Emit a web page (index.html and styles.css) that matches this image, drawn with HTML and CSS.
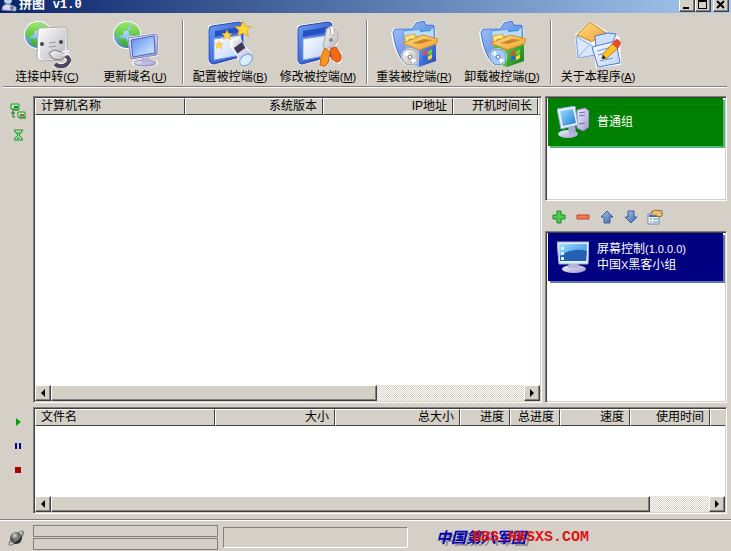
FILE: index.html
```html
<!DOCTYPE html>
<html lang="zh-CN">
<head>
<meta charset="utf-8">
<title>拼图 v1.0</title>
<link rel="stylesheet" href="styles.css">
</head>
<body>
<svg class="defs" aria-hidden="true">
  <defs>
    <radialGradient id="sea" cx=".4" cy=".3" r=".8"><stop offset="0" stop-color="#c8e6ff"/><stop offset=".5" stop-color="#6fb0ee"/><stop offset="1" stop-color="#2c63c0"/></radialGradient>
    <linearGradient id="land" x1="0" y1="0" x2="0" y2="1"><stop offset="0" stop-color="#9cea62"/><stop offset="1" stop-color="#38a834"/></linearGradient>
    <linearGradient id="plate" x1="0" y1="0" x2="1" y2="1"><stop offset="0" stop-color="#fbfbfb"/><stop offset="1" stop-color="#b4b4b8"/></linearGradient>
    <linearGradient id="screen" x1="0" y1="0" x2="1" y2="1"><stop offset="0" stop-color="#5a86ee"/><stop offset=".5" stop-color="#9cc0fb"/><stop offset="1" stop-color="#dcecff"/></linearGradient>
    <linearGradient id="blue" x1="0" y1="0" x2="1" y2="1"><stop offset="0" stop-color="#6e9cf6"/><stop offset="1" stop-color="#1c40b4"/></linearGradient>
    <linearGradient id="pane" x1="0" y1="0" x2="1" y2="1"><stop offset="0" stop-color="#ffffff"/><stop offset="1" stop-color="#bcd2f8"/></linearGradient>
    <linearGradient id="folder" x1="0" y1="0" x2="1" y2="1"><stop offset="0" stop-color="#a8c6fa"/><stop offset="1" stop-color="#3c6cd8"/></linearGradient>
    <linearGradient id="gold" x1="0" y1="0" x2="1" y2="1"><stop offset="0" stop-color="#ffe08a"/><stop offset="1" stop-color="#eea02c"/></linearGradient>
    <linearGradient id="greenbox" x1="0" y1="0" x2="1" y2="1"><stop offset="0" stop-color="#5cc84a"/><stop offset="1" stop-color="#137a18"/></linearGradient>
    <linearGradient id="lilac" x1="0" y1="0" x2="1" y2="1"><stop offset="0" stop-color="#f4f2ff"/><stop offset="1" stop-color="#9c98cc"/></linearGradient>
    <linearGradient id="cyan" x1="0" y1="0" x2="1" y2="1"><stop offset="0" stop-color="#9ce0ff"/><stop offset="1" stop-color="#2478d8"/></linearGradient>
    <linearGradient id="arrow" x1="0" y1="0" x2="1" y2="1"><stop offset="0" stop-color="#a8c8f0"/><stop offset="1" stop-color="#3c64a8"/></linearGradient>
    <radialGradient id="planet" cx=".4" cy=".3" r=".7"><stop offset="0" stop-color="#d8d8d8"/><stop offset=".5" stop-color="#606060"/><stop offset="1" stop-color="#202020"/></radialGradient>
    <path id="star" d="M0-10L3-3 10-3 5 2 7 9 0 5-7 9-5 2-10-3-3-3z"/>
    <g id="globe">
      <circle cx="15" cy="15" r="14" fill="#fff"/>
      <circle cx="15" cy="15" r="13" fill="url(#sea)"/>
      <path d="M4 9C7 3 12 2 17 2l2 3-3 2 1 3-5 1-1 4-4 1 1 3-4-2-2-4zM19 3c5 1 9 6 9 11l-5 3-5-2-2-4 3-2zM6 18l8 1 3 4-3 4-6-3z" fill="url(#land)"/>
    </g>
    <g id="install">
      <path d="M1 12L4 8h17l4-6 9-2 3 4h8l1 28-10 10-21 3C8 38 3 28 1 12z" fill="#fff"/>
      <path d="M3 12L5 9h17l4-6 8-2 2 4h8l1 26-10 10-20 3C9 37 5 27 3 12z" fill="url(#folder)" stroke="#4470d0"/>
      <path d="M13 11l31-3v23L18 42z" fill="#b8dcfb" stroke="#5c9cdc"/>
      <path d="M15 16l10-2v3l4-1v7l-14 3z" fill="#ffe58a" stroke="#dca63a"/>
      <path d="M18 20l7-1M18 23l8-1" stroke="#b88928" fill="none"/>
      <path d="M30 11l11-1" stroke="#4c90dc" stroke-width="2"/>
    </g>
    <g id="installFront">
      <path d="M13 23l20-8 15 4-2 5-17 6z" fill="url(#gold)" stroke="#d08c28"/>
      <path d="M22 23l12-4 9 1-13 4z" fill="#cc8428"/>
      <path d="M33 32q2-2 4-1v4q-2-1-4 1z" fill="#e84c28"/><path d="M38 31q2 0 4-2v4q-2 2-4 2z" fill="#70cc38"/>
      <path d="M33 37q2-2 4-1v4q-2-1-4 1z" fill="#2a68e0"/><path d="M38 36q2 0 4-2v4q-2 2-4 2z" fill="#ffd030"/>
      <circle cx="20" cy="37" r="9" fill="#fff"/>
    </g>
  </defs>
</svg>

<header class="titlebar">
  <svg class="app-icon" viewBox="0 0 16 16" aria-hidden="true"><circle cx="7" cy="4" r="4" fill="#b8d0f0"/><path d="M1 14q0-6 6-6l8 3v4z" fill="#d8d8e8" stroke="#7884a8"/><circle cx="11" cy="12" r="2" fill="#6878a8"/></svg>
  <h1 class="app-title">拼图 <span class="app-version">v1.0</span></h1>
  <div class="window-controls">
    <button class="win-btn" aria-label="最小化"><svg viewBox="0 0 12 12"><path d="M2 8h6v2H2z"/></svg></button>
    <button class="win-btn" aria-label="最大化"><svg viewBox="0 0 12 12"><path d="M1 1h9v9H1zM2 3v6h7V3z" fill-rule="evenodd"/></svg></button>
    <button class="win-btn close" aria-label="关闭"><svg viewBox="0 0 12 12"><path d="M2 2l7 7M9 2L2 9" stroke="#000" stroke-width="2"/></svg></button>
  </div>
</header>

<nav class="toolbar" aria-label="工具栏">
  <button class="tool">
    <svg viewBox="0 0 48 48" aria-hidden="true"><use href="#globe"/>
      <path d="M17 8l24-1q3 0 3 3v26l-5 4-20 1q-5-1-5-5l1-24q0-3 2-4z" fill="#fff" stroke="#aaa"/>
      <path d="M18 9l23-1q2 0 2 3l-1 27-21 2q-4 0-4-4V12q0-3 1-3z" fill="url(#plate)"/>
      <circle cx="19" cy="24" r="2" fill="#444"/><circle cx="38" cy="22" r="2" fill="#444"/>
      <path d="M26 23l7-1M26 27l7-1" stroke="#999"/>
      <path d="M37 35c9 0 11 5 7 9-3 3-9 3-12 0" fill="none" stroke="#fff" stroke-width="6"/>
      <path d="M37 35c9 0 11 5 7 9-3 3-9 3-12 0" fill="none" stroke="#4c4864" stroke-width="4"/>
      <path d="M26 33l5-3 8 2 4 4-5 4-8-1z" fill="url(#plate)" stroke="#777"/><path d="M39 32l7-1M40 35l6-1" stroke="#eee" stroke-width="2"/>
    </svg>
    <span class="tool-label">连接中转<span class="latin">(<u>C</u>)</span></span>
  </button>
  <button class="tool">
    <svg viewBox="0 0 48 48" aria-hidden="true"><use href="#globe" x="1"/>
      <ellipse cx="34" cy="43" rx="13" ry="4" fill="#fff"/><ellipse cx="34" cy="43" rx="11" ry="3" fill="url(#lilac)" stroke="#8884b8"/>
      <path d="M29 36l9-1 2 7-9 1z" fill="#b4b0d8"/>
      <path d="M16 17l29-4 3 3-1 20-27 4z" fill="#fff"/>
      <path d="M17 18l28-4 2 2-1 19-26 4z" fill="url(#lilac)" stroke="#8884b8"/>
      <path d="M20 20l23-4 1 17-22 4z" fill="url(#screen)" stroke="#4462c4"/>
    </svg>
    <span class="tool-label">更新域名<span class="latin">(<u>U</u>)</span></span>
  </button>
  <span class="separator"></span>
  <button class="tool">
    <svg viewBox="0 0 48 48" aria-hidden="true">
      <path d="M4 5l29-4q5 0 5 5v31L7 45q-5 0-5-5V9q0-4 2-4z" fill="#fff"/>
      <path d="M6 6l27-4q4 0 4 4v30L8 44q-5 0-5-5V10q0-4 3-4z" fill="url(#blue)" stroke="#2346b4"/>
      <path d="M9 11l25-4v5L9 17z" fill="#2450c0"/><path d="M8 19l27-4v20L8 40z" fill="url(#pane)" stroke="#7ea2ec"/>
      <g fill="#ffd83c" stroke="#e0a020"><use href="#star" transform="translate(37 9) scale(.8)"/><use href="#star" transform="translate(21 15) scale(.5)"/><use href="#star" transform="translate(13 25) scale(.4)"/></g>
      <path d="M25 20l9-3 4 8 8 8v9l-6 4-6-2-4-10-6-8z" fill="#fff"/>
      <path d="M26 21l8-3 4 8-10 5z" fill="url(#plate)"/><path d="M28 28l8-6 4 7-8 6z" fill="#3c3a58"/><path d="M31 34l8-6 7 6q2 7-6 11-5 0-6-3z" fill="url(#lilac)"/>
      <ellipse cx="40" cy="40" rx="7" ry="5" transform="rotate(-38 40 40)" fill="#d4f0ff" stroke="#78a0cc"/>
    </svg>
    <span class="tool-label">配置被控端<span class="latin">(<u>B</u>)</span></span>
  </button>
  <button class="tool">
    <svg viewBox="0 0 48 48" aria-hidden="true">
      <path d="M5 5l29-4q5 0 5 5v31L8 45q-5 0-5-5V9q0-4 2-4z" fill="#fff"/>
      <path d="M7 6l27-4q4 0 4 4v30L8 44q-4 0-4-5V10q0-4 3-4z" fill="url(#blue)" stroke="#2346b4"/>
      <path d="M9 11l25-4v5L9 17z" fill="#2450c0"/><path d="M9 19l26-4v20L9 40z" fill="url(#pane)" stroke="#7ea2ec"/>
      <path d="M32 9l5-3 5 3 3 10-3 8 6 6v8l-3 3-6-2-2-11-3 14-7 2-2-4 2-9 5-8-1-10z" fill="#fff"/>
      <path d="M33 9l3-2 1 8 3 1V8l4 5v7l-5 8-3-1-5 4-2-5 2-8z" fill="url(#plate)" stroke="#aaa"/><circle cx="37" cy="20" r="2" fill="#888"/>
      <path d="M31 28l5 4-2 11q-3 5-8 2l1-9z" fill="#f69422" stroke="#cc5c10"/><path d="M36 29l6-2 5 8q1 8-5 7l-4-3z" fill="#f46a14" stroke="#cc4c10"/>
    </svg>
    <span class="tool-label">修改被控端<span class="latin">(<u>M</u>)</span></span>
  </button>
  <span class="separator"></span>
  <button class="tool">
    <svg viewBox="0 0 48 48" aria-hidden="true"><use href="#install"/>
      <path d="M16 25l13 4v18l-12-4z" fill="#8cb4f4"/><path d="M29 29l17-6v18l-17 6z" fill="url(#blue)"/>
      <use href="#installFront"/><circle cx="20" cy="37" r="8" fill="url(#plate)" stroke="#999"/><path d="M20 37l-7-3 4-4zM20 37l7 3-4 4z" fill="#fff"/><circle cx="20" cy="37" r="2" fill="#fff" stroke="#777"/>
    </svg>
    <span class="tool-label">重装被控端<span class="latin">(<u>R</u>)</span></span>
  </button>
  <button class="tool">
    <svg viewBox="0 0 48 48" aria-hidden="true"><use href="#install"/>
      <path d="M16 25l13 4v18l-12-4z" fill="#58b84a"/><path d="M29 29l17-6v18l-17 6z" fill="url(#greenbox)"/>
      <use href="#installFront"/><circle cx="20" cy="37" r="8" fill="#a8c8f8" stroke="#6488cc"/><path d="M20 37l-7-3 4-4zM20 37l7 3-4 4z" fill="#eef6ff"/><circle cx="20" cy="37" r="2" fill="#fff" stroke="#4c70bc"/>
    </svg>
    <span class="tool-label">卸载被控端<span class="latin">(<u>D</u>)</span></span>
  </button>
  <span class="separator"></span>
  <button class="tool">
    <svg viewBox="0 0 48 48" aria-hidden="true">
      <path d="M1 15L16 1l18 11v21L3 39z" fill="#fff"/>
      <path d="M2 16l31-3v20L4 38z" fill="#dce8fc" stroke="#7c9ce0"/>
      <path d="M3 15L16 2l16 11-13 9z" fill="url(#gold)" stroke="#c08828"/>
      <path d="M3 17l15 9 15-12M4 37l12-13" fill="none" stroke="#8cace8"/>
      <path d="M18 22l22-9 6 5 1 27-25 3z" fill="#fff"/>
      <path d="M21 16l13-3 8 1-4 10-16 3z" fill="#cfe0ff" stroke="#4878d8"/>
      <path d="M18 27l24-6 4 22-22 4z" fill="url(#pane)" stroke="#4878d8"/>
      <path d="M23 31l15-4M24 35l8-2M26 41l13-3" stroke="#6890e0"/>
      <path d="M29 34l10-11 5 5-11 10-5 1z" fill="#ffc428" stroke="#c07c10"/><path d="M38 24l4-5q3 0 5 4l-3 6z" fill="#e64a28"/><path d="M28 39l1-4 3 3z" fill="#222"/>
    </svg>
    <span class="tool-label">关于本程序<span class="latin">(<u>A</u>)</span></span>
  </button>
</nav>

<main class="workspace">
  <section class="upper">
    <div class="rail">
      <button class="rail-btn" aria-label="网络"><svg viewBox="0 0 16 16"><path d="M1 1h8v5H1zM8 9h7v5H8z" fill="#bfe8bf" stroke="#169c26"/><path d="M4 3h4v2H4z" fill="#168c20"/><path d="M10 11h4v2h-4z" fill="#c05040"/><path d="M2 7h7M1 10h4M3 8v6h2M9 15h7" stroke="#107818" fill="none"/></svg></button>
      <button class="rail-btn" aria-label="等待"><svg viewBox="0 0 16 16"><path d="M4 3h9M4 13h9M5 3v2l3 3-3 3v2M12 3v2L9 8l3 3v2" fill="none" stroke="#169c26"/><path d="M6 5h5L8 8zM8 9l3 4H6z" fill="#50b858"/></svg></button>
    </div>
    <div class="sunken list">
      <table class="grid hosts">
        <colgroup><col class="c-name"><col class="c-os"><col class="c-ip"><col class="c-uptime"><col></colgroup>
        <thead><tr><th>计算机名称</th><th>系统版本</th><th>IP地址</th><th>开机时间长</th><th class="filler"></th></tr></thead>
      </table>
      <div class="scrollbar">
        <button class="scroll-btn" aria-label="向左滚动"><svg viewBox="0 0 8 8"><path d="M6 0v8L2 4z"/></svg></button>
        <div class="track"><div class="thumb hosts-thumb"></div></div>
        <button class="scroll-btn" aria-label="向右滚动"><svg viewBox="0 0 8 8"><path d="M2 0v8l4-4z"/></svg></button>
      </div>
    </div>
    <aside class="side">
      <ul class="sunken groups">
        <li class="item group-item">
          <svg viewBox="0 0 32 32" aria-hidden="true"><path d="M20 4l8-2 4 3v16l-6 4-6-3z" fill="url(#lilac)" stroke="#8480b8"/><path d="M22 7l6-1M22 10l6-1M22 18l6-1" stroke="#6c68a0"/><ellipse cx="11" cy="28" rx="10" ry="4" fill="url(#lilac)"/><path d="M11 20l7-1 1 8-7 1z" fill="#aca8d8"/><path d="M0 3L18 0l3 19L4 23z" fill="#e8f0ff" stroke="#90a8d8"/><path d="M3 5l13-2 3 14L6 20z" fill="url(#cyan)"/></svg>
          <span>普通组</span>
        </li>
      </ul>
      <div class="group-tools">
        <button class="mini" aria-label="添加"><svg viewBox="0 0 16 16"><path d="M6 2h4v4h4v4h-4v4H6v-4H2V6h4z" fill="#50c850" stroke="#188c20"/></svg></button>
        <button class="mini" aria-label="删除"><svg viewBox="0 0 16 16"><path d="M2 6h12v4H2z" fill="#f07850" stroke="#c84428"/></svg></button>
        <button class="mini" aria-label="上移"><svg viewBox="0 0 16 16"><path d="M8 2l6 6h-3v6H5V8H2z" fill="url(#arrow)" stroke="#3c5c98"/></svg></button>
        <button class="mini" aria-label="下移"><svg viewBox="0 0 16 16"><path d="M8 14l6-6h-3V2H5v6H2z" fill="url(#arrow)" stroke="#3c5c98"/></svg></button>
        <button class="mini" aria-label="属性"><svg viewBox="0 0 16 16"><path d="M1 5h11v10H1z" fill="#f4f8ff" stroke="#6888b8"/><path d="M2 7h9" stroke="#3c68b8" stroke-width="2"/><path d="M3 10h2M6 10h5M3 13h2M6 13h5" stroke="#6888b8"/><path d="M4 3l4-2 7 1v5l-4 1-2-2-3 1z" fill="#e8c074" stroke="#8c6c30"/></svg></button>
      </div>
      <ul class="sunken plugins">
        <li class="item plugin-item">
          <svg viewBox="0 0 32 32" aria-hidden="true"><ellipse cx="17" cy="28" rx="12" ry="4" fill="url(#lilac)"/><path d="M12 22h9l1 5H11z" fill="#b8b8d8"/><path d="M0 1h32l-1 22H2z" fill="#e4ecf8" stroke="#a0b0cc"/><path d="M2 3h28l-1 17H3z" fill="url(#cyan)"/><path d="M3 15q12-9 27-5l-1 10H3z" fill="#2460b4"/><path d="M4 6h3v3H4zM4 11h3v3H4zM4 16h3v3H4z" fill="#d8f4ff"/></svg>
          <span>屏幕控制<span class="latin">(1.0.0.0)</span><br>中国<span class="latin">X</span>黑客小组</span>
        </li>
      </ul>
    </aside>
  </section>

  <section class="lower">
    <div class="rail">
      <button class="rail-btn" aria-label="开始"><svg viewBox="0 0 16 16"><path d="M6 4l5 4-5 4z" fill="#0c9c10"/></svg></button>
      <button class="rail-btn" aria-label="暂停"><svg viewBox="0 0 16 16"><path d="M5 5h2v6H5zM9 5h2v6H9z" fill="#0000a0"/></svg></button>
      <button class="rail-btn" aria-label="停止"><svg viewBox="0 0 16 16"><path d="M5 5h6v6H5z" fill="#a80000"/></svg></button>
    </div>
    <div class="sunken list">
      <table class="grid transfers">
        <colgroup><col class="c-file"><col class="c-size"><col class="c-total"><col class="c-progress"><col class="c-progress"><col class="c-speed"><col class="c-time"><col></colgroup>
        <thead><tr><th>文件名</th><th>大小</th><th>总大小</th><th>进度</th><th>总进度</th><th>速度</th><th>使用时间</th><th class="filler"></th></tr></thead>
      </table>
      <div class="scrollbar">
        <button class="scroll-btn" aria-label="向左滚动"><svg viewBox="0 0 8 8"><path d="M6 0v8L2 4z"/></svg></button>
        <div class="track"><div class="thumb transfers-thumb"></div></div>
        <button class="scroll-btn" aria-label="向右滚动"><svg viewBox="0 0 8 8"><path d="M2 0v8l4-4z"/></svg></button>
      </div>
    </div>
  </section>
</main>

<footer class="statusbar">
  <svg class="planet" viewBox="0 0 16 16" aria-hidden="true"><path d="M1 15q-1-3 3-6M15 1q1 3-3 6M1 15q4 1 10-5t4-9q-3 0-5 2" fill="none" stroke="#777"/><circle cx="8" cy="8" r="6" fill="url(#planet)"/><path d="M2 13q7-1 12-10" fill="none" stroke="#999"/></svg>
  <div class="meters"><div class="meter"></div><div class="meter"></div></div>
  <div class="status-cell"></div>
  <div class="brand"><span class="brand-name">中国第八军团</span><span class="brand-url">BBS.HKSXS.COM</span></div>
</footer>
</body>
</html>
```
FILE: styles.css
```css
* { box-sizing: border-box; }

html, body { height: 100%; }

body {
  margin: 0;
  display: flex;
  flex-direction: column;
  overflow: hidden;
  background: #d4d0c8;
  color: #000;
  font: 12px/16px "Liberation Sans", "Noto Sans CJK SC", sans-serif;
}

.defs { position: absolute; width: 0; height: 0; }

button {
  margin: 0;
  padding: 0;
  border: 0;
  background: none;
  color: inherit;
  font: inherit;
}

svg { display: block; flex: none; }

.latin { font-size: 11px; }

/* Title bar */
.titlebar {
  flex: none;
  display: flex;
  align-items: flex-end;
  height: 13px;
  padding: 0 2px 1px 1px;
  overflow: hidden;
  background: linear-gradient(to right, #0a246a, #a6caf0);
}

.app-icon { width: 16px; height: 16px; margin-right: 2px; }

.app-title {
  flex: 1;
  margin: 0;
  color: #fff;
  font: bold 13px/14px "Liberation Mono", "Noto Sans CJK SC", monospace;
}

.app-version { font-size: 12px; }

.window-controls { display: flex; }

.win-btn {
  width: 16px;
  height: 14px;
  padding: 0 0 0 1px;
  background: #d4d0c8;
  border: 1px solid;
  border-color: #fff #404040 #404040 #fff;
  box-shadow: inset -1px -1px #808080;
}

.win-btn svg { width: 12px; height: 12px; }

.win-btn.close { margin-left: 2px; }

/* Toolbar */
.toolbar {
  flex: none;
  display: flex;
  height: 74px;
  margin: 0 4px 0 3px;
  padding-top: 7px;
  border-bottom: 1px solid #808080;
  box-shadow: 0 1px #fff;
}

.tool {
  flex: none;
  width: 88px;
  display: flex;
  flex-direction: column;
  align-items: center;
  white-space: nowrap;
}

.tool svg { width: 48px; height: 48px; }

.tool-label { padding-top: 1px; }

.separator {
  flex: none;
  width: 2px;
  height: 64px;
  margin: 0 2px 0 3px;
  border-left: 1px solid #808080;
  border-right: 1px solid #fff;
}

.tool + .separator ~ .separator { margin-left: 4px; }

/* Work area */
.workspace {
  flex: 1;
  min-height: 0;
  display: flex;
  flex-direction: column;
  gap: 4px;
  padding: 9px 4px 5px 0;
}

.upper { flex: 1; min-height: 0; display: flex; }

.lower { flex: none; display: flex; min-height: 107px; }

.rail { flex: none; width: 33px; padding: 3px 0 0 6px; }

.rail-btn {
  display: grid;
  place-items: center;
  width: 24px;
  height: 24px;
}

.rail-btn svg { width: 16px; height: 16px; }

.sunken {
  background: #fff;
  border: 1px solid;
  border-color: #808080 #fff #fff #808080;
  box-shadow: inset 1px 1px #404040, inset -1px -1px #d4d0c8;
  padding: 1px;
}

.list {
  flex: 1;
  min-width: 0;
  display: flex;
  flex-direction: column;
  justify-content: space-between;
}

/* Column headers */
.grid {
  width: 100%;
  table-layout: fixed;
  border-collapse: separate;
  border-spacing: 0;
}

.grid th {
  height: 17px;
  padding: 0 5px;
  overflow: hidden;
  background: #d4d0c8;
  border: 1px solid;
  border-color: #fff #404040 #404040 #fff;
  font-weight: normal;
  line-height: 15px;
  text-align: right;
  white-space: nowrap;
}

.grid th:first-child { text-align: left; }

.grid th.filler { padding: 0; border-right: 0; }

.c-name { width: 150px; }
.c-os { width: 138px; }
.c-ip { width: 130px; }
.c-uptime { width: 85px; }
.c-file { width: 180px; }
.c-size { width: 120px; }
.c-total { width: 125px; }
.c-progress { width: 50px; }
.c-speed { width: 70px; }
.c-time { width: 80px; }

/* Scroll bars */
.scrollbar { display: flex; height: 16px; }

.track {
  flex: 1;
  background: repeating-conic-gradient(#fff 0 25%, #d4d0c8 0 50%) 0 0 / 2px 2px;
}

.scroll-btn, .thumb {
  background: #d4d0c8;
  border: 1px solid;
  border-color: #fff #404040 #404040 #fff;
  box-shadow: inset -1px -1px #808080;
}

.scroll-btn { display: grid; place-items: center; width: 16px; }

.scroll-btn svg { width: 8px; height: 8px; }

.thumb { height: 100%; }

.hosts-thumb { width: 69%; }

.transfers-thumb { width: 91%; }

/* Group and plug-in lists */
.side {
  flex: none;
  display: flex;
  flex-direction: column;
  width: 182px;
  margin-left: 3px;
}

.groups, .plugins { margin: 0; padding: 1px 2px; list-style: none; }

.groups { height: 105px; }

.plugins { flex: 1; }

.item {
  display: flex;
  align-items: center;
  gap: 8px;
  height: 48px;
  margin-right: 1px;
  padding-left: 9px;
  color: #fff;
}

.item svg { width: 32px; height: 32px; }

.group-item { background: #008000; box-shadow: 2px 2px #54b87c; }

.plugin-item { background: #000080; box-shadow: 2px 2px #6078b0; }

.group-tools {
  display: flex;
  align-items: center;
  height: 30px;
  padding: 1px 0 0 2px;
}

.mini { display: grid; place-items: center; width: 24px; height: 24px; }

.mini svg { width: 16px; height: 16px; }

/* Status bar */
.statusbar {
  flex: none;
  display: flex;
  align-items: center;
  height: 32px;
  padding: 4px 0 0 8px;
  border-top: 1px solid #808080;
  box-shadow: inset 0 1px #fff;
}

.planet { width: 16px; height: 16px; margin-right: 9px; }

.meters { display: grid; gap: 1px; width: 185px; }

.meter { height: 12px; border: 1px solid #808080; }

.status-cell {
  width: 185px;
  height: 21px;
  margin-left: 5px;
  border: 1px solid;
  border-color: #808080 #fff #fff #808080;
}

.brand { position: relative; margin-left: 28px; white-space: nowrap; }

.brand-name {
  color: #0000b0;
  font: italic bold 15px/18px "Noto Sans CJK SC", sans-serif;
  text-shadow: 3px 2px #909090;
}

.brand-url {
  position: absolute;
  left: 36px;
  top: 1px;
  color: #e01010;
  font: bold 15px/18px "Liberation Mono", monospace;
}
```
